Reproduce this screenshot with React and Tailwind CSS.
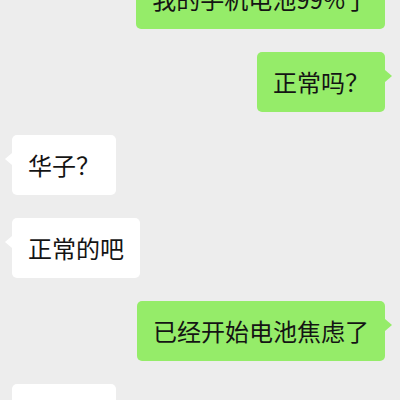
const messages = [
  { side: 'right', text: '我的手机电池99%了' },
  { side: 'right', text: '正常吗？' },
  { side: 'left', text: '华子？' },
  { side: 'left', text: '正常的吧' },
  { side: 'right', text: '已经开始电池焦虑了' },
  { side: 'left', text: '还好吧' },
];

const Bubble = ({ side, text }) => {
  const mine = side === 'right';
  return (
    <div className={mine ? 'flex justify-end' : 'flex justify-start'}>
      <div
        className={`relative rounded-[5px] px-4 py-4 text-[24px] leading-[28px] whitespace-nowrap text-[#141414] ${
          mine ? 'bg-[#95ec69]' : 'bg-white'
        }`}
      >
        {text}
        {mine ? (
          <span className="absolute right-[-7px] top-[18px] h-0 w-0 border-y-[6px] border-l-[7px] border-y-transparent border-l-[#95ec69]" />
        ) : (
          <span className="absolute left-[-7px] top-[18px] h-0 w-0 border-y-[6px] border-r-[7px] border-y-transparent border-r-white" />
        )}
      </div>
    </div>
  );
};

export default function App() {
  return (
    <div
      className="h-[400px] w-[400px] overflow-hidden bg-[#ededed]"
      style={{ fontFamily: '"Noto Sans CJK SC", "Noto Sans", sans-serif' }}
    >
      <div className="mt-[-31px] flex flex-col gap-[23px] pl-3 pr-[15px]">
        {messages.map((m, i) => (
          <Bubble key={i} side={m.side} text={m.text} />
        ))}
      </div>
    </div>
  );
}
